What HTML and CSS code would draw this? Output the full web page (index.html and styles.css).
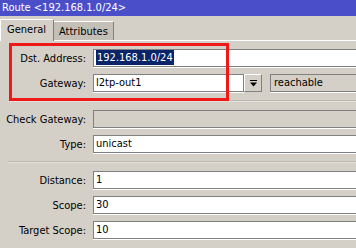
FILE: index.html
```html
<!DOCTYPE html>
<html lang="en">
<head>
    <meta charset="UTF-8">
    <title>Route &lt;192.168.1.0/24&gt;</title>
    <link rel="stylesheet" href="styles.css">
</head>
<body>

<div class="window">
    <div class="titlebar">Route &lt;192.168.1.0/24&gt;</div>

    <div class="tabs">
        <div class="tab active">General</div>
        <div class="tab">Attributes</div>
    </div>

    <div class="panel">
        <div class="group">
            <label class="label">Dst. Address:</label>
            <div class="field"><span class="selected">192.168.1.0/24</span></div>

            <label class="label">Gateway:</label>
            <div class="field-row">
                <div class="field gateway">l2tp-out1</div>
                <div class="drop-btn">
                    <svg width="9" height="9" viewBox="0 0 9 9">
                        <rect x="1" y="1" width="7" height="1" fill="#000"/>
                        <path d="M1 3.5h7L4.5 7.5z" fill="#000"/>
                    </svg>
                </div>
                <div class="field readonly">reachable</div>
            </div>
        </div>

        <div class="separator"></div>

        <div class="group">
            <label class="label">Check Gateway:</label>
            <div class="field readonly"></div>

            <label class="label">Type:</label>
            <div class="field">unicast</div>
        </div>

        <div class="separator"></div>

        <div class="group">
            <label class="label">Distance:</label>
            <div class="field">1</div>

            <label class="label">Scope:</label>
            <div class="field">30</div>

            <label class="label">Target Scope:</label>
            <div class="field">10</div>
        </div>

        <!-- annotation box drawn over the first two rows -->
        <div class="highlight-box"></div>
    </div>
</div>

</body>
</html>
```

FILE: styles.css
```css
body {
    margin: 0;
    background-color: #d4d0c8;
    font-family: "DejaVu Sans Condensed", "Liberation Sans", sans-serif;
    font-size: 11px;
    color: #000;
    overflow: hidden;
}

.window {
    width: 356px;
    height: 248px;
    overflow: hidden;
}

.titlebar {
    height: 16px;
    line-height: 16px;
    padding-left: 2px;
    background-color: #4a4fc9;
    color: #fff;
    white-space: nowrap;
}

.tabs {
    display: flex;
    align-items: flex-end;
    height: 25px;
}

.tab {
    height: 18px;
    line-height: 19px;
    padding: 0 5px;
    background-color: #c4c0b8;
    border-top: 1px solid #fff;
    border-right: 1px solid #808080;
    border-left: 1px solid #fff;
    margin-bottom: 1px;
}

.tab.active {
    height: 21px;
    line-height: 20px;
    padding: 0 7px 0 6px;
    background-color: #d4d0c8;
    margin-bottom: 0;
    margin-right: -1px;
    position: relative;
    z-index: 1;
}

.panel {
    position: relative;
    border-top: 1px solid #fff;
    margin-top: -1px;
    padding-top: 8px;
}

.group {
    display: grid;
    grid-template-columns: 86px 280px;
    column-gap: 7px;
    row-gap: 7px;
    align-items: center;
}

.label {
    text-align: right;
    white-space: nowrap;
}

.field {
    height: 16px;
    line-height: 16px;
    padding-left: 2px;
    background-color: #fff;
    border: 1px solid #808080;
    box-shadow: 0 1px 0 #fff;
    white-space: nowrap;
}

.field.readonly {
    background-color: #d4d0c8;
}

.selected {
    background-color: #0a246a;
    color: #fff;
    padding: 1px;
}

.field-row {
    display: flex;
    align-items: center;
}

.field.gateway {
    width: 147px;
    flex: none;
}

.drop-btn {
    width: 16px;
    height: 16px;
    margin-left: 0;
    display: flex;
    align-items: center;
    justify-content: center;
    border: 1px solid #fff;
    border-right-color: #808080;
    border-bottom-color: #808080;
    flex: none;
}

.field-row .readonly {
    flex: 1;
    margin-left: 8px;
    padding-left: 3px;
}

.separator {
    margin: 8px 0 8px 8px;
    border-top: 1px solid #bebab2;
    border-bottom: 1px solid #e4e1db;
}

.highlight-box {
    position: absolute;
    left: 9px;
    top: 2px;
    width: 214px;
    height: 52px;
    border: 3px solid #f01818;
}
```
